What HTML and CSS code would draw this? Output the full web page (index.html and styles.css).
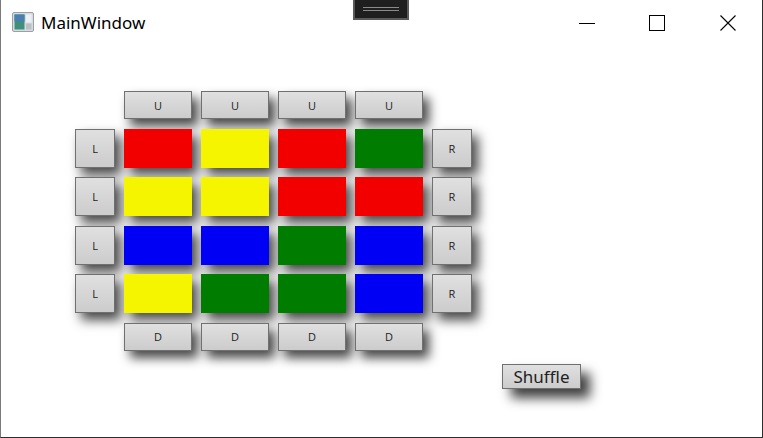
FILE: index.html
```html
<!DOCTYPE html>
<html>
<head>
<meta charset="utf-8">
<link rel="stylesheet" href="styles.css">
</head>
<body>
<div class="window">
  <div class="titlebar">
    <svg class="app-icon" width="22" height="20" viewBox="0 0 22 20">
      <rect x="0.5" y="0.5" width="21" height="19" rx="1.5" fill="#d8dce0" stroke="#9aa0a6"/>
      <rect x="2.5" y="2.5" width="10" height="15" fill="#3f8f7a"/>
      <rect x="2.5" y="2.5" width="10" height="7" fill="#4a7fb0"/>
      <rect x="14" y="2.5" width="5.5" height="8" fill="#eef1f3"/>
      <rect x="14" y="11.5" width="5.5" height="6" fill="#b9c0c6"/>
    </svg>
    <span class="title">MainWindow</span>
    <div class="notch"><div class="notch-lines"></div></div>
    <div class="controls">
      <div class="ctl"><svg width="16" height="16" viewBox="0 0 16 16"><path d="M0 8.5H16" stroke="#000" stroke-width="1"/></svg></div>
      <div class="ctl"><svg width="16" height="16" viewBox="0 0 16 16"><rect x="0.5" y="0.5" width="15" height="15" fill="none" stroke="#000"/></svg></div>
      <div class="ctl"><svg width="16" height="16" viewBox="0 0 16 16"><path d="M0.5 0.5L15.5 15.5M15.5 0.5L0.5 15.5" stroke="#000" stroke-width="1.1"/></svg></div>
    </div>
  </div>
  <div class="content">
    <div class="board">
      <div></div>
      <div class="btn">U</div><div class="btn">U</div><div class="btn">U</div><div class="btn">U</div>
      <div></div>

      <div class="btn">L</div>
      <div class="cell red"></div><div class="cell yellow"></div><div class="cell red"></div><div class="cell green"></div>
      <div class="btn">R</div>

      <div class="btn">L</div>
      <div class="cell yellow"></div><div class="cell yellow"></div><div class="cell red"></div><div class="cell red"></div>
      <div class="btn">R</div>

      <div class="btn">L</div>
      <div class="cell blue"></div><div class="cell blue"></div><div class="cell green"></div><div class="cell blue"></div>
      <div class="btn">R</div>

      <div class="btn">L</div>
      <div class="cell yellow"></div><div class="cell green"></div><div class="cell green"></div><div class="cell blue"></div>
      <div class="btn">R</div>

      <div></div>
      <div class="btn">D</div><div class="btn">D</div><div class="btn">D</div><div class="btn">D</div>
      <div></div>
    </div>
    <div class="btn shuffle">Shuffle</div>
  </div>
</div>
</body>
</html>
```

FILE: styles.css
```css
html, body {
  margin: 0;
  padding: 0;
  background: #ffffff;
}
.window {
  position: relative;
  width: 763px;
  height: 438px;
  box-sizing: border-box;
  border-left: 1px solid #7a7a7a;
  border-right: 1px solid #2e2e2e;
  border-bottom: 1px solid #2e2e2e;
  background: #fff;
  display: flex;
  flex-direction: column;
  overflow: hidden;
  font-family: "Open Sans", "Noto Sans", "Liberation Sans", sans-serif;
}
.titlebar {
  height: 45px;
  display: flex;
  align-items: flex-start;
  position: relative;
}
.app-icon {
  margin: 12px 0 0 11px;
}
.title {
  margin: 11px 0 0 7px;
  font-size: 17px;
  color: #000;
  line-height: 24px;
  font-family: "Noto Sans", "Open Sans", sans-serif;
}
.notch {
  position: absolute;
  left: 352px;
  top: 0;
  width: 56px;
  height: 20px;
  box-sizing: border-box;
  background: #1f1f1f;
  border: 2px solid #5a5a5a;
  border-top: none;
  display: flex;
  align-items: center;
  justify-content: center;
}
.notch-lines {
  width: 36px;
  height: 4px;
  border-top: 1px solid #8a8a8a;
  border-bottom: 1px solid #8a8a8a;
  box-sizing: border-box;
  margin-top: -1px;
}
.controls {
  margin-left: auto;
  display: flex;
  margin-right: -1px;
}
.ctl {
  width: 70.5px;
  height: 45px;
  display: flex;
  align-items: center;
  justify-content: center;
}
.content {
  flex: 1;
  display: flex;
  align-items: flex-start;
  padding: 46px 0 0 74px;
}
.board {
  display: grid;
  grid-template-columns: 40px 68px 68px 68px 68px 40px;
  grid-template-rows: 28px 39px 39px 39px 39px 28px;
  column-gap: 9px;
  row-gap: 9.5px;
}
.btn {
  box-sizing: border-box;
  border: 1px solid #707070;
  background: linear-gradient(#e0e0e0, #cccccc);
  box-shadow: 6px 7px 11px rgba(0, 0, 0, 0.72);
  display: flex;
  align-items: center;
  justify-content: center;
  font-size: 11px;
  color: #222;
  font-family: "Open Sans", "Noto Sans", sans-serif;
}
.cell {
  box-shadow: 6px 7px 11px rgba(0, 0, 0, 0.72);
}
.red { background: #f20000; }
.yellow { background: #f5f500; }
.green { background: #007d00; }
.blue { background: #0000f5; }
.shuffle {
  width: 79px;
  height: 25px;
  margin: 273px 0 0 30px;
  font-size: 17px;
  color: #222;
  font-family: "Noto Sans", "Open Sans", sans-serif;
  box-shadow: 9px 9px 12px rgba(0, 0, 0, 0.75);
}
```
